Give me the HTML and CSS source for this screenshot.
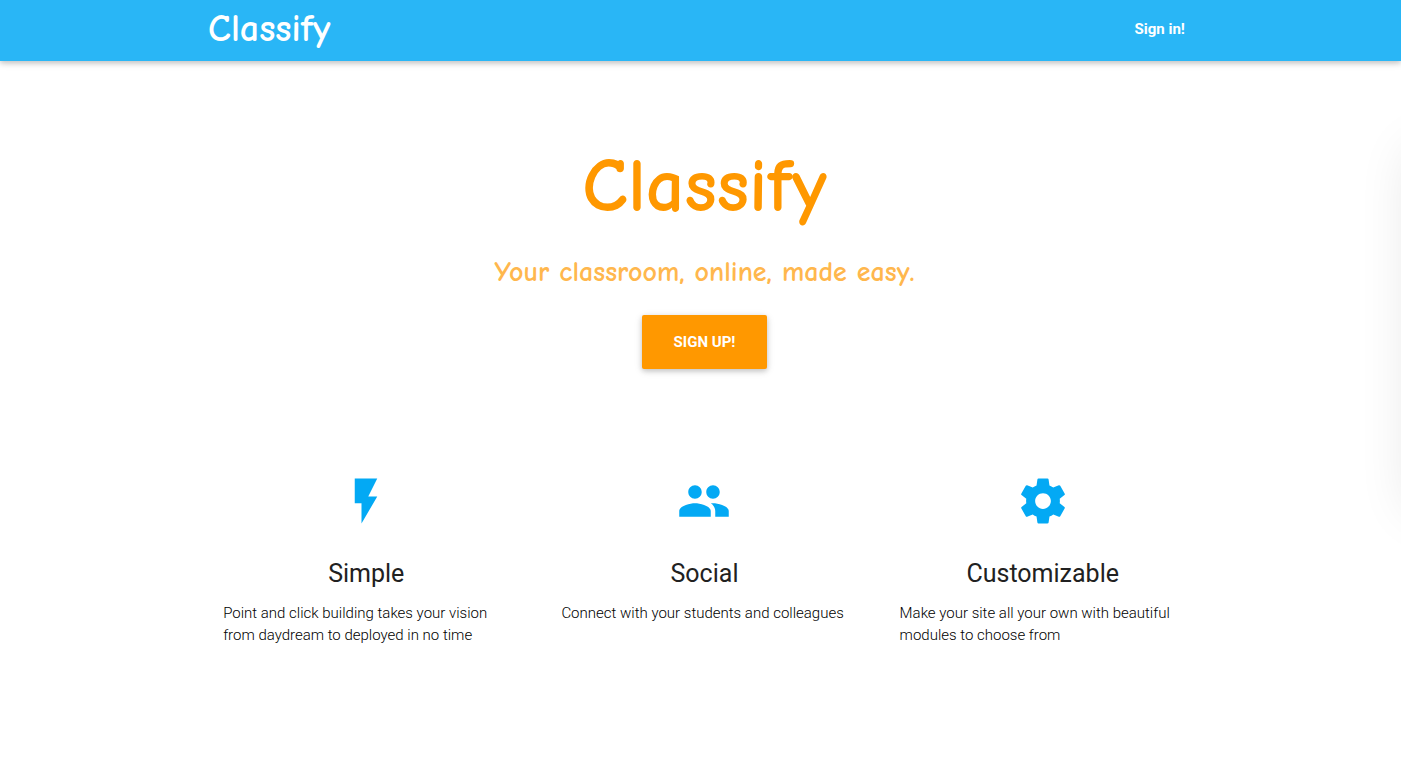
FILE: index.html
```html
<!DOCTYPE html>
<html lang="en">
<head>
<meta charset="utf-8">
<meta name="viewport" content="width=device-width, initial-scale=1">
<title>Classify</title>
<link rel="stylesheet" href="styles.css">
</head>
<body>
<header class="navbar">
  <nav class="container navbar-inner">
    <a class="brand" href="#">Classify</a>
    <a class="signin" href="#">Sign in!</a>
  </nav>
</header>
<main class="container">
  <section class="hero">
    <h1 class="hero-title">Classify</h1>
    <p class="tagline">Your classroom, online, made easy.</p>
    <button class="signup" type="button">SIGN UP!</button>
  </section>
  <section class="features">
    <article class="feature">
      <svg class="icon" viewBox="0 0 24 24" aria-hidden="true"><path d="M7 2v11h3v9l7-12h-4l4-8z"/></svg>
      <h2 class="feature-title">Simple</h2>
      <p class="feature-text">Point and click building takes your vision from daydream to deployed in no time</p>
    </article>
    <article class="feature">
      <svg class="icon" viewBox="0 0 24 24" aria-hidden="true"><path d="M16 11c1.66 0 2.99-1.34 2.99-3S17.660 5 16 5c-1.660 0-3 1.340-3 3s1.340 3 3 3zm-8 0c1.660 0 2.990-1.340 2.990-3S9.660 5 8 5C6.340 5 5 6.340 5 8s1.340 3 3 3zm0 2c-2.330 0-7 1.170-7 3.500V19h14v-2.500c0-2.330-4.670-3.500-7-3.500zm8 0c-.29 0-.62.020-.97.050 1.160.84 1.970 1.970 1.970 3.450V19h6v-2.500c0-2.330-4.670-3.500-7-3.500z"/></svg>
      <h2 class="feature-title">Social</h2>
      <p class="feature-text">Connect with your students and colleagues</p>
    </article>
    <article class="feature">
      <svg class="icon" viewBox="0 0 24 24" aria-hidden="true"><path d="M19.430 12.980c.04-.32.07-.64.07-.98s-.03-.66-.07-.98l2.110-1.650c.19-.15.24-.42.12-.64l-2-3.460c-.12-.22-.39-.3-.61-.22l-2.490 1c-.52-.4-1.080-.73-1.690-.98l-.38-2.650C14.460 2.180 14.250 2 14 2h-4c-.25 0-.46.18-.49.42l-.38 2.650c-.61.25-1.170.59-1.690.98l-2.490-1c-.23-.09-.49 0-.61.22l-2 3.460c-.13.22-.07.49.12.64l2.110 1.650c-.04.32-.07.65-.07.98s.03.66.07.98l-2.110 1.650c-.19.15-.24.42-.12.64l2 3.460c.12.22.39.3.61.22l2.490-1c.52.4 1.080.73 1.690.98l.38 2.650c.03.24.24.42.49.42h4c.25 0 .46-.18.49-.42l.38-2.650c.61-.25 1.170-.59 1.690-.98l2.490 1c.23.09.49 0 .61-.22l2-3.460c.12-.22.07-.49-.12-.64l-2.110-1.650zM12 15.500c-1.930 0-3.500-1.570-3.500-3.500s1.570-3.500 3.500-3.500 3.500 1.570 3.500 3.500-1.570 3.500-3.500 3.500z"/></svg>
      <h2 class="feature-title">Customizable</h2>
      <p class="feature-text">Make your site all your own with beautiful modules to choose from</p>
    </article>
  </section>
</main>
<aside class="drawer" aria-hidden="true"></aside>
</body>
</html>
```
FILE: styles.css
```css
* {
  box-sizing: border-box;
}

body {
  margin: 0;
  min-height: 100vh;
  overflow-x: hidden;
  background: #fff;
  color: #212121;
  font-family: Roboto, "Liberation Sans", sans-serif;
  font-size: 15px;
  line-height: 22px;
}

.navbar,
main {
  padding-left: 8px;
}

.navbar {
  background: #29b6f6;
  box-shadow: 0 2px 5px rgba(0, 0, 0, 0.16), 0 2px 8px rgba(0, 0, 0, 0.12);
}

.container {
  width: 73%;
  margin: 0 auto;
}

.navbar-inner {
  display: flex;
  align-items: center;
  justify-content: space-between;
  height: 61px;
  padding: 0 28px 4px 12px;
}

.brand,
.signin {
  color: #fff;
  text-decoration: none;
}

.brand,
.hero-title,
.tagline {
  font-family: "Comic Neue", Lato, sans-serif;
  font-variant-ligatures: none;
}

.brand {
  font-size: 38px;
  font-weight: 700;
  line-height: 56px;
}

.signin {
  font-weight: 700;
}

.hero {
  display: flex;
  flex-direction: column;
  align-items: center;
  padding-top: 86px;
}

.hero-title {
  margin: 0;
  color: #ff9800;
  font-size: 76px;
  font-weight: 700;
  line-height: 80px;
}

.tagline {
  margin: 26px 0 24px;
  color: #ffb74d;
  font-size: 28px;
  font-weight: 700;
  line-height: 38px;
  text-align: center;
}

.signup {
  height: 54px;
  padding: 0 32px;
  border: 0;
  border-radius: 2px;
  background: #ff9800;
  box-shadow: 0 2px 5px rgba(0, 0, 0, 0.16), 0 2px 8px rgba(0, 0, 0, 0.12);
  color: #fff;
  font: 700 15px/54px Roboto, sans-serif;
}

.features {
  display: grid;
  grid-template-columns: repeat(3, 1fr);
  padding-top: 105px;
}

.feature {
  padding: 0 26px;
}

.icon {
  display: block;
  width: 54px;
  height: 54px;
  margin: 0 auto;
  fill: #03a9f4;
}

.feature-title {
  margin: 30px 0 12px;
  font-size: 25px;
  font-weight: 400;
  line-height: 32px;
  text-align: center;
}

.feature-text {
  margin: 0;
  color: #000;
  font-weight: 300;
}

/* Closed drawer: only its shadow reaches the page edge */
.drawer {
  position: fixed;
  top: 130px;
  left: 100%;
  width: 240px;
  height: 360px;
  margin-left: 10px;
  box-shadow: 0 20px 50px rgba(0, 0, 0, 0.11);
}
```
